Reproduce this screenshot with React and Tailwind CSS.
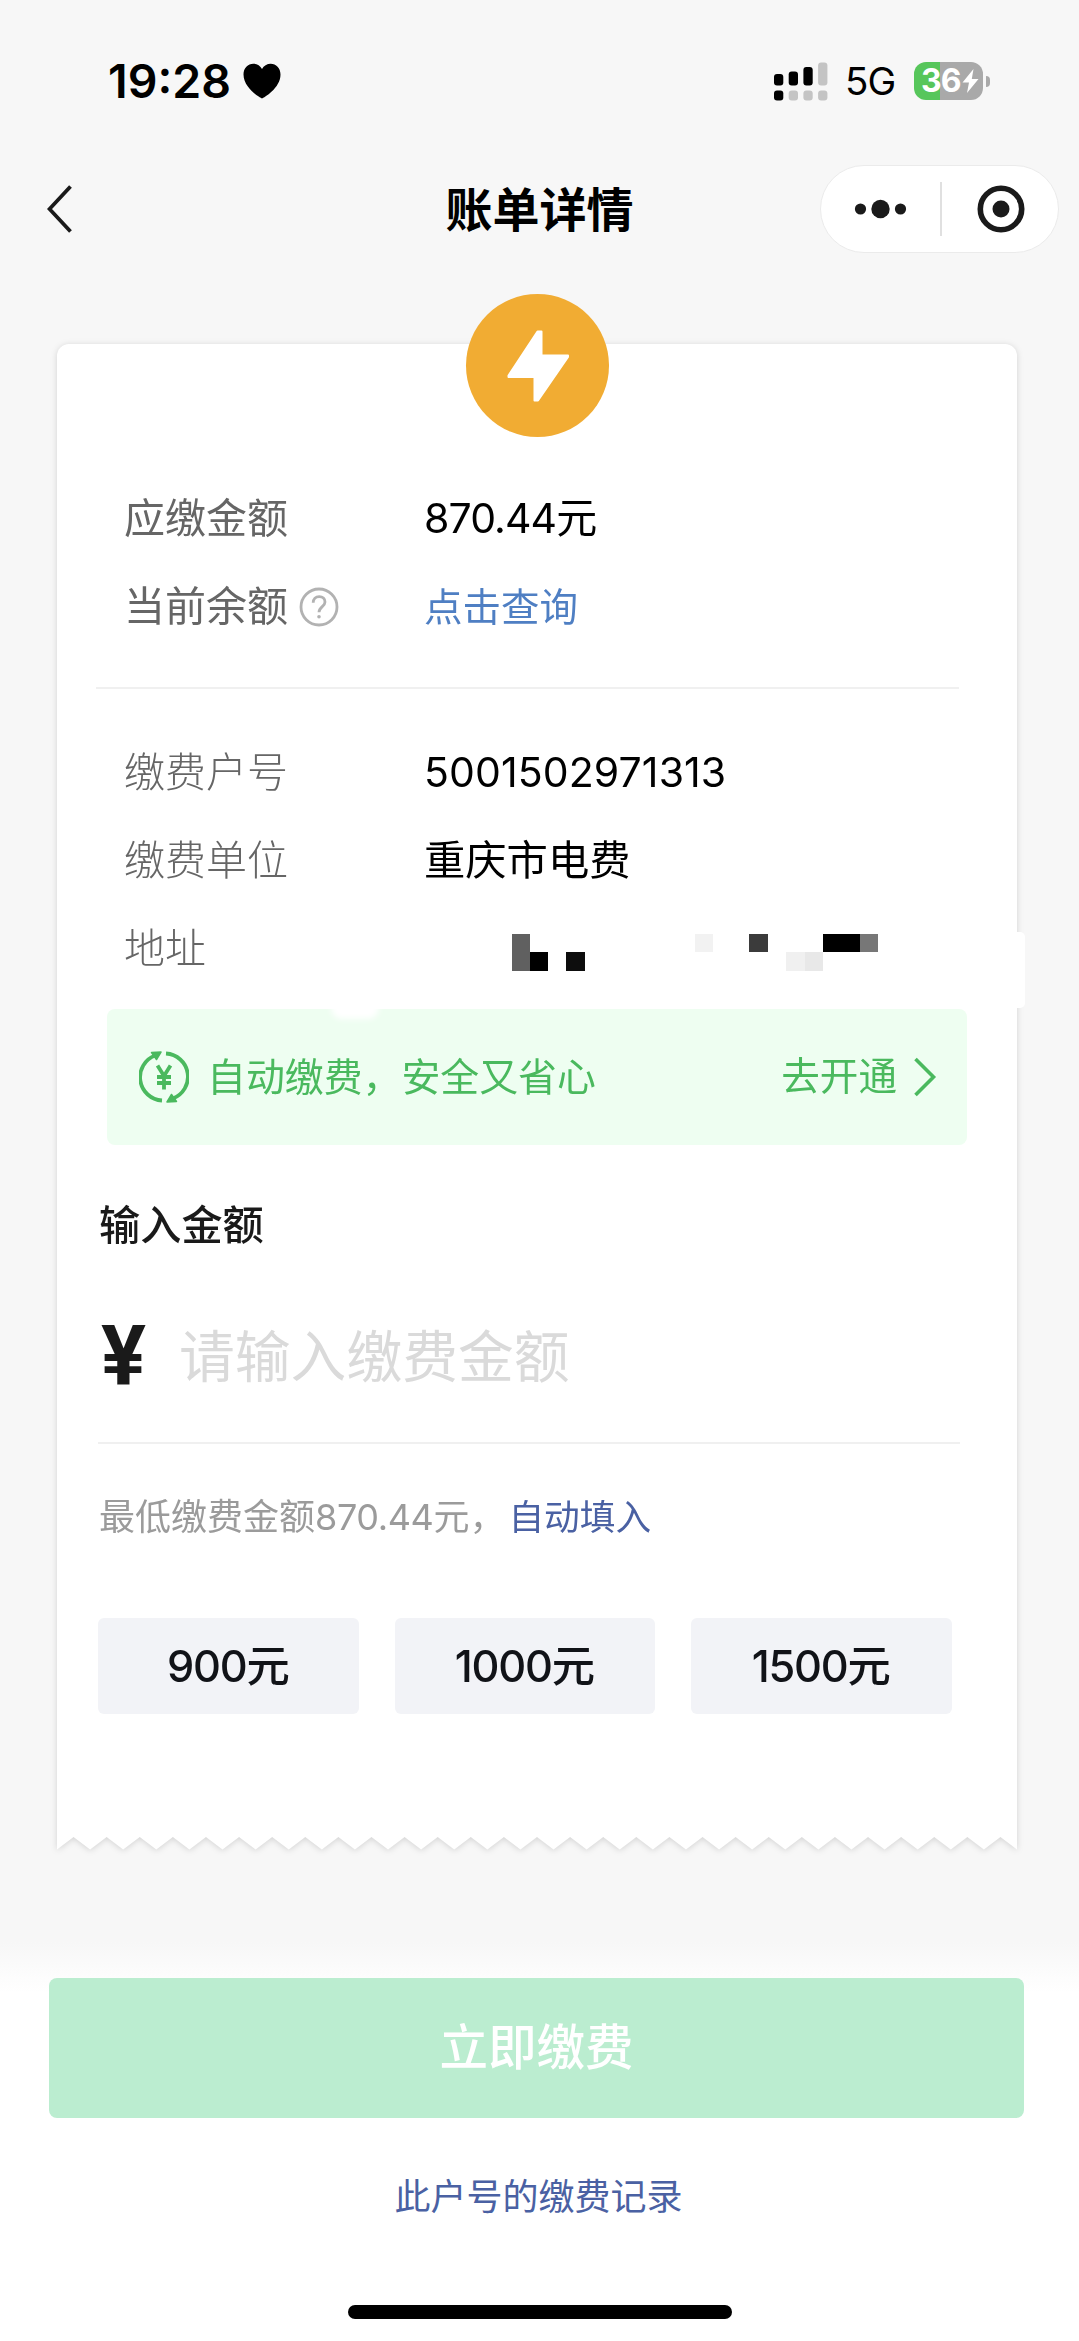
import React from 'react';

const amounts = ['900元', '1000元', '1500元'];

// pixelated address cells
const mosaic = [
  { x: 88, y: 0, w: 18, h: 37, color: '#606060' },
  { x: 106, y: 18, w: 18, h: 19, color: '#000000' },
  { x: 142, y: 18, w: 19, h: 19, color: '#0d0d0d' },
  { x: 271, y: 0, w: 18, h: 18, color: '#f2f2f2' },
  { x: 325, y: 0, w: 19, h: 18, color: '#3b3b3b' },
  { x: 362, y: 18, w: 19, h: 19, color: '#f0f0f0' },
  { x: 381, y: 18, w: 18, h: 19, color: '#e8e8e8' },
  { x: 399, y: 0, w: 37, h: 18, color: '#000000' },
  { x: 436, y: 0, w: 18, h: 18, color: '#777777' },
];

const TEETH = 29;
const zigzag = Array.from({ length: TEETH }, (_, i) => {
  const step = 960 / TEETH;
  return `L${((i + 0.5) * step).toFixed(2)} 1 L${((i + 1) * step).toFixed(2)} 13.5`;
}).join(' ');

function StatusBar() {
  return (
    <div className="flex h-[108px] items-start justify-between pl-[108px] pr-[89px] pt-[51px]">
      <div className="flex h-[60px] items-center">
        <span className="text-[46.5px] font-semibold leading-[60px]">19:28</span>
        <svg className="ml-[12px] h-[36px] w-[38px]" viewBox="0 0 38 36">
          <path
            d="M19 35.5C17 34.8 .5 25 .5 11.500C.5 5 5 .8 10.300 .8C14 .8 17.300 2.800 19 6C20.700 2.800 24 .8 27.700 .8C33 .8 37.500 5 37.500 11.500C37.500 25 21 34.800 19 35.500Z"
            fill="#000"
          />
        </svg>
      </div>
      <div className="flex h-[60px] items-center">
        <svg className="h-[39px] w-[54px]" viewBox="0 0 54 39">
          <g fill="#000">
            <rect x="0" y="12" width="9.300" height="11.500" rx="3" />
            <rect x="14.700" y="9.500" width="9.300" height="14" rx="3" />
            <rect x="29.400" y="5" width="9.300" height="18.500" rx="3" />
            <rect x="0" y="28.500" width="9.300" height="10" rx="3" />
          </g>
          <g fill="#c4c4c4">
            <rect x="44.100" y=".5" width="9.300" height="23" rx="3" />
            <rect x="14.700" y="28.500" width="9.300" height="10" rx="3" />
            <rect x="29.400" y="28.500" width="9.300" height="10" rx="3" />
            <rect x="44.100" y="28.500" width="9.300" height="10" rx="3" />
          </g>
        </svg>
        <span className="ml-[17px] w-[52px] text-[38.5px] leading-[62px] tracking-[-0.8px]">5G</span>
        <div className="ml-[17px] flex h-[38px] w-[69px] items-center rounded-[12px] bg-linear-to-r from-[#57c65b] from-38% to-[#a9a9a9] to-38% pl-[7px] text-white">
          <span className="text-[32px] font-bold leading-[38px] tracking-[-0.8px]">36</span>
          <svg className="ml-[1px] h-[24px] w-[17px] shrink-0" viewBox="0 0 17 24">
            <path d="M11.500 0L.5 13.500H7L5 24L16.500 10H9.800Z" fill="#fff" />
          </svg>
        </div>
        <div className="ml-[3px] h-[11px] w-[4px] rounded-r-full bg-[#a9a9a9]" />
      </div>
    </div>
  );
}

function NavBar() {
  return (
    <div className="flex h-[201px] items-start justify-between pl-[47px] pr-[20px] pt-[57px]">
      <div className="w-[212px]">
        <svg className="mt-[20px] h-[48px] w-[27px]" viewBox="0 0 27 48" fill="none">
          <path d="M23.500 1.500L2.500 24L23.500 46.500" stroke="#1a1a1a" strokeWidth="3.800" />
        </svg>
      </div>
      <h1 className="text-[47px] font-semibold leading-[90px]">账单详情</h1>
      <div className="flex h-[88px] w-[239px] items-center rounded-full border border-[#ebebeb] bg-white">
        <svg className="ml-[33px] h-[20px] w-[54px]" viewBox="0 0 54 20" fill="#1a1a1a">
          <circle cx="6.500" cy="10" r="5.600" />
          <circle cx="26.500" cy="10" r="9.200" />
          <circle cx="46.500" cy="10" r="5.600" />
        </svg>
        <div className="ml-[32px] h-[54px] w-[2px] bg-[#e0e0e0]" />
        <svg className="ml-[35px] h-[48px] w-[48px]" viewBox="0 0 48 48">
          <circle cx="24" cy="24" r="20.700" fill="none" stroke="#1a1a1a" strokeWidth="5.600" />
          <circle cx="24" cy="24" r="8.500" fill="#1a1a1a" />
        </svg>
      </div>
    </div>
  );
}

function Row({ label, light, children }) {
  return (
    <div className="flex h-[88px] items-center">
      <div className={`flex w-[300px] shrink-0 items-center text-[41px] text-[#666] ${light ? 'font-light' : 'font-normal'}`}>{label}</div>
      <div className="text-[41px] text-black">{children}</div>
    </div>
  );
}

function AutoPayIcon() {
  return (
    <svg className="h-[52px] w-[50px]" viewBox="0 0 50 52" fill="none">
      <path d="M23 49.500A23.300 23.300 0 0 1 16 4.500" stroke="#4ab95e" strokeWidth="3.800" />
      <path d="M27 2.500A23.300 23.300 0 0 1 34 47.500" stroke="#4ab95e" strokeWidth="3.800" />
      <path d="M12.500 1.500L22 1L17.500 8.500Z" fill="#4ab95e" stroke="#4ab95e" strokeWidth="1.500" strokeLinejoin="round" />
      <path d="M37.500 50.500L28 51L32.500 43.500Z" fill="#4ab95e" stroke="#4ab95e" strokeWidth="1.500" strokeLinejoin="round" />
      <path d="M18.500 14.500L25 25L31.500 14.500M25 25V38.500M18 26H32M18 32H32" stroke="#4ab95e" strokeWidth="3.800" />
    </svg>
  );
}

function BillCard() {
  return (
    <div className="relative ml-[57px] mt-[35px] w-[960px]">
      <div className="drop-shadow-[0_1px_3px_rgba(0,0,0,0.15)]">
        <div className="h-[1493px] rounded-t-[12px] bg-white px-[41px] pt-[131px]">
          <div className="pl-[26px]">
            <Row label="应缴金额">
              <span className="tracking-[-0.9px]">870.44</span>元
            </Row>
            <Row
              label={
                <>
                  当前余额
                  <svg className="ml-[11px] h-[40px] w-[40px]" viewBox="0 0 40 40" fill="none" stroke="#b2b2b2" strokeWidth="2.800">
                    <circle cx="20" cy="20" r="18" />
                    <path d="M14.200 15.800C14.200 12 16.700 9.600 20.200 9.600C23.700 9.600 26 11.900 26 15C26 19.500 20 19.800 20 25.300" />
                    <circle cx="20" cy="29.800" r="1.800" fill="#b2b2b2" stroke="none" />
                  </svg>
                </>
              }
            >
              <a className="text-[38.5px] text-[#4f7fc3]">点击查询</a>
            </Row>
          </div>
          <div className="-ml-[2px] mb-[40px] mt-[36px] h-[2px] w-[863px] bg-[#f0f0f0]" />
          <div className="pl-[26px]">
            <Row label="缴费户号" light>
              <span className="tracking-[0.1px]">5001502971313</span>
            </Row>
            <Row label="缴费单位" light>
              <span className="text-[41.3px]">重庆市电费</span>
            </Row>
            <Row label="地址" light>
              <div className="relative h-[40px] w-[500px]">
                {mosaic.map((m) => (
                  <span
                    key={`${m.x}-${m.y}`}
                    className="absolute"
                    style={{ left: m.x, top: m.y + 5, width: m.w, height: m.h, background: m.color }}
                  />
                ))}
              </div>
            </Row>
          </div>

          <div className="relative ml-[9px] mt-[16px] flex h-[136px] w-[860px] items-center rounded-[8px] bg-[#eefef1] pl-[32px] pr-[30px] text-[#4ab95e]">
            <div className="absolute left-[224px] top-[-12px] h-[22px] w-[48px] rounded-full bg-white blur-[3px]" />
            <AutoPayIcon />
            <span className="ml-[18px] text-[38.9px]">自动缴费，安全又省心</span>
            <span className="ml-auto text-[38.6px]">去开通</span>
            <svg className="ml-[16px] h-[40px] w-[24px]" viewBox="0 0 24 40" fill="none">
              <path d="M2.500 2L20.500 20L2.500 38" stroke="#4ab95e" strokeWidth="3.600" />
            </svg>
          </div>

          <h2 className="ml-[1px] mt-[50px] text-[41.2px] font-medium leading-[60px] text-[#1a1a1a]">输入金额</h2>
          <div className="mt-[52px] flex h-[100px] items-center">
            <span className="w-[81px] pl-[3px] font-[Roboto] text-[84px] font-bold leading-[100px] text-[#1a1a1a]">¥</span>
            <span className="text-[55.8px] leading-[100px] text-[#dadada]">请输入缴费金额</span>
          </div>
          <div className="mt-[35px] h-[2px] w-[862px] bg-[#f0f0f0]" />
          <p className="ml-[1px] mt-[45px] text-[36px] leading-[56px] text-[#9b9b9b]">
            最低缴费金额<span className="tracking-[-0.4px]">870.44</span>元，
            <a className="ml-[3px] text-[35.7px] text-[#4a61a3]">自动填入</a>
          </p>
          <div className="mt-[73px] flex gap-[36px]">
            {amounts.map((amount) => (
              <button
                key={amount}
                className="h-[96px] w-[260.5px] rounded-[6px] bg-[#f2f3f7] pr-[1px] text-[43.3px] font-medium tracking-[-1.2px] text-[#111318]"
              >
                {amount}
              </button>
            ))}
          </div>
        </div>
        <svg className="-mt-[1px] block h-[26px] w-[960px]" viewBox="0 0 960 26">
          <path d={`M0 0V13.500 ${zigzag} V0Z`} fill="#fff" />
        </svg>
      </div>
      <div className="absolute left-[950px] top-[588px] h-[76px] w-[18px] rounded-[5px] bg-white" />
      {/* service badge sits on the top edge */}
      <div className="absolute left-[409px] top-[-50px] flex size-[143px] items-center justify-center rounded-full bg-[#f1ac33]">
        <svg className="h-[74px] w-[64px]" viewBox="0 0 64 74">
          <path
            d="M31.500 2.500H35.500V26.500H62V28L32 71.500H28.500V48H2.500V46.500Z"
            fill="#fff"
            stroke="#fff"
            strokeWidth="2"
            strokeLinejoin="round"
          />
        </svg>
      </div>
    </div>
  );
}

export default function App() {
  return (
    <div className="flex h-[2341px] w-[1079px] flex-col overflow-hidden bg-[#f7f7f7] font-[Inter,'Noto_Sans_CJK_SC',sans-serif] text-black">
      <StatusBar />
      <NavBar />
      <BillCard />
      <div className="mt-[80px] flex grow flex-col items-center bg-linear-to-b from-[#f7f7f7] to-white to-[50px] pt-[36px]">
        <button className="-ml-[6px] h-[140px] w-[975px] rounded-[8px] bg-[#bbedd0] text-[48.5px] font-medium text-white">
          立即缴费
        </button>
        <a className="-ml-[2px] mt-[51px] text-[36px] leading-[56px] text-[#4a61a3]">此户号的缴费记录</a>
        <div className="mb-[22px] mt-auto h-[14px] w-[384px] rounded-full bg-black" />
      </div>
    </div>
  );
}
